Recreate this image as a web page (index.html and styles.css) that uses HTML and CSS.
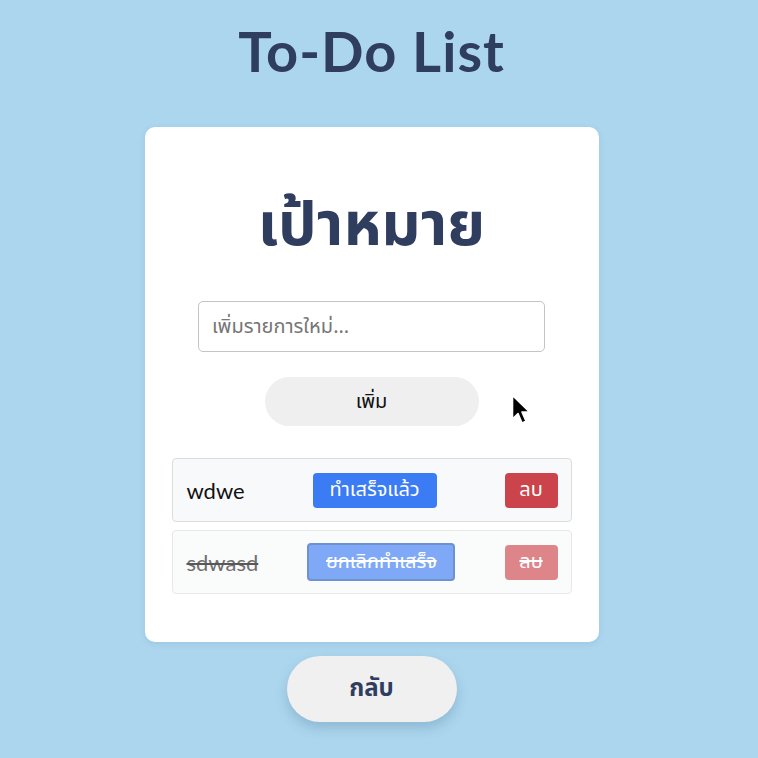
FILE: index.html
```html
<!DOCTYPE html>
<html lang="th">
<head>
<meta charset="utf-8">
<title>To-Do List</title>
<link rel="stylesheet" href="styles.css">
</head>
<body>
<main class="page">
  <h1 class="title">To-Do List</h1>
  <section class="card">
    <h2 class="card-title">เป้าหมาย</h2>
    <input class="new-item" type="text" placeholder="เพิ่มรายการใหม่...">
    <button class="add-btn">เพิ่ม</button>
    <ul class="list">
      <li class="item">
        <span class="item-text">wdwe</span>
        <button class="btn btn-done">ทำเสร็จแล้ว</button>
        <button class="btn btn-del">ลบ</button>
      </li>
      <li class="item item-complete">
        <span class="item-text">sdwasd</span>
        <button class="btn btn-done btn-focus">ยกเลิกทำเสร็จ</button>
        <button class="btn btn-del">ลบ</button>
      </li>
    </ul>
  </section>
  <button class="back-btn">กลับ</button>
</main>
<svg class="cursor" width="22" height="34" viewBox="0 0 22 34">
  <path d="M1.5 1.5 L1.5 25 L7 19.5 L11 29 L15 27.3 L11 18 L18.5 18 Z" fill="#000" stroke="#fff" stroke-width="1.6" stroke-linejoin="round"/>
</svg>
</body>
</html>
```
FILE: styles.css
```css
* { box-sizing: border-box; }
html, body { margin: 0; padding: 0; }
body {
  background: #acd6ee;
  font-family: "Noto Sans Thai", "Noto Sans", sans-serif;
  min-height: 758px;
  overflow: hidden;
}
.page {
  width: 743px;
  display: flex;
  flex-direction: column;
  align-items: center;
}
.title {
  margin: 18px 0 0;
  font-size: 56px;
  line-height: 66px;
  font-weight: 700;
  color: #2f3d5e;
  letter-spacing: 1px;
  font-family: "Lato", "Noto Sans", sans-serif;
}
.card {
  margin-top: 43px;
  width: 454px;
  height: 515px;
  background: #fff;
  border-radius: 10px;
  padding: 60px 27px 0;
  display: flex;
  flex-direction: column;
  align-items: center;
  box-shadow: 0 2px 6px rgba(60, 100, 130, 0.12);
}
.card-title {
  margin: 0;
  font-size: 61px;
  line-height: 78px;
  font-weight: 700;
  color: #2f3d5e;
}
.new-item {
  margin-top: 36px;
  width: 347px;
  height: 51px;
  border: 1px solid #c4c4c4;
  border-radius: 5px;
  padding: 0 13px;
  font-size: 20px;
  font-family: inherit;
  color: #333;
  outline: none;
}
.new-item::placeholder { color: #767676; }
.add-btn {
  margin-top: 25px;
  width: 214px;
  height: 49px;
  border: none;
  border-radius: 25px;
  background: #efefef;
  font-family: inherit;
  font-size: 20px;
  color: #111;
}
.list {
  list-style: none;
  margin: 32px 0 0;
  padding: 0;
  width: 400px;
  display: flex;
  flex-direction: column;
  gap: 8px;
}
.item {
  height: 64px;
  background: #f8f9fa;
  border: 1px solid #dcdcdc;
  border-radius: 4px;
  padding: 0 13px 0 14px;
  display: flex;
  align-items: center;
  justify-content: space-between;
}
.item-text {
  font-size: 22px;
  color: #111;
  font-family: "Lato", "Noto Sans", sans-serif;
}
.btn {
  height: 35px;
  border: none;
  border-radius: 4px;
  color: #fff;
  font-family: inherit;
  font-size: 20px;
  padding: 0;
}
.btn-done { background: #3b7cf4; width: 124px; }
.btn-del { background: #cb444b; width: 53px; }
.item-complete { opacity: 0.65; text-decoration: line-through; }
.item-complete .item-text { color: #222; }
.item-complete .btn { text-decoration: line-through; }
.item-complete .btn-done { width: 148px; height: 38px; }
.btn-focus { border: 2px solid #2257b8; }
.back-btn {
  margin-top: 14px;
  width: 170px;
  height: 66px;
  border: none;
  border-radius: 33px;
  background: #f0f0f0;
  font-family: inherit;
  font-size: 24px;
  font-weight: 700;
  color: #2f3d5e;
  box-shadow: 0 6px 12px rgba(60, 100, 130, 0.25);
}
.cursor {
  position: absolute;
  left: 511px;
  top: 394px;
}
```
